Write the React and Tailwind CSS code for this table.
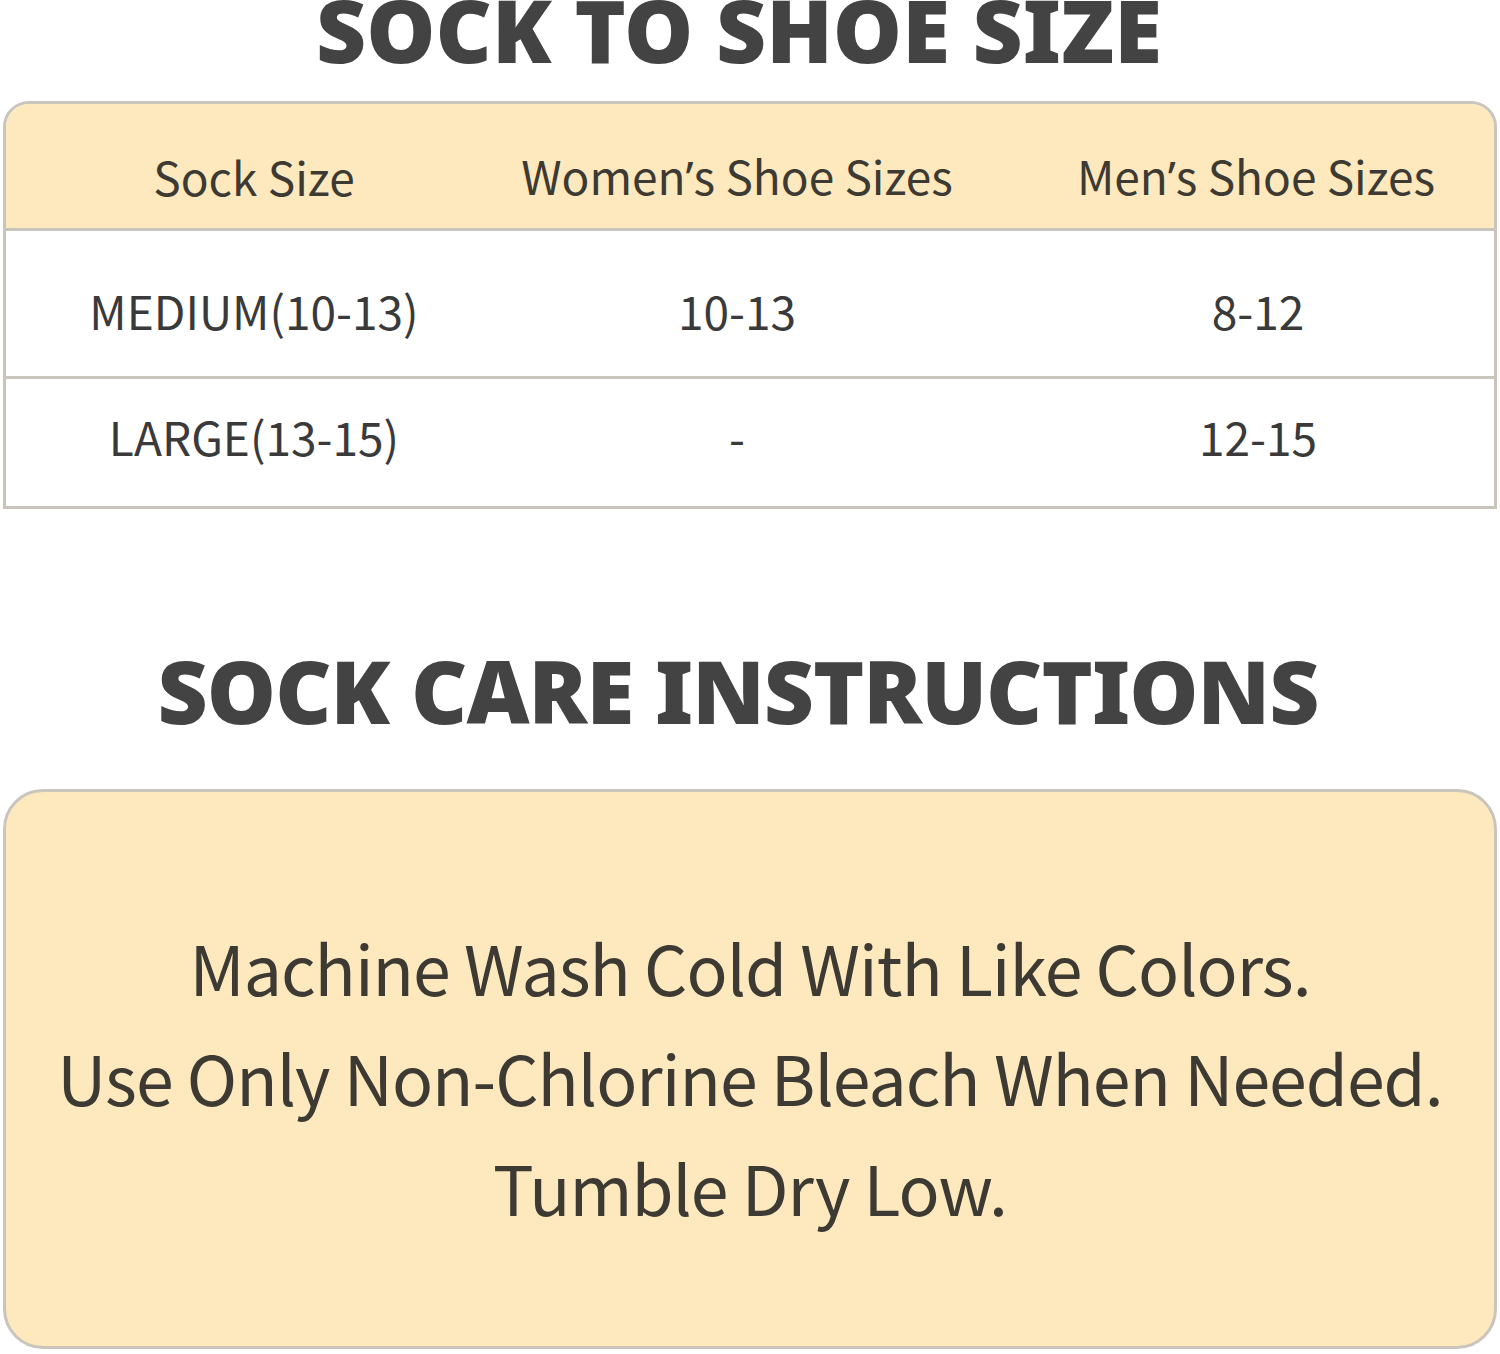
export default function App() {
  const rows = [
    { cells: ["MEDIUM(10-13)", "10-13", "8-12"], cls: "h-[148px] pt-[14px] border-b-[3px] border-[#c9c5bd]" },
    { cells: ["LARGE(13-15)", "-", "12-15"], cls: "h-[127px] pb-[12px]" },
  ];
  const apos = <span className="font-['Noto_Sans',sans-serif]">’</span>;

  return (
    <div className="w-[1500px] h-[1354px] bg-white overflow-hidden text-[#3d3a33]">
      <h1 className="h-[101px] -mt-[14px] pr-[22px] text-center font-['Noto_Sans','Open_Sans',sans-serif] font-black text-[87px] leading-[1] text-[#434343]">
        SOCK TO SHOE SIZE
      </h1>

      <div className="mx-[3px] mt-[14px] w-[1494px] border-[3px] border-[#c9c5bd] rounded-t-[26px] overflow-hidden font-['Noto_Sans_CJK_SC','Noto_Sans',sans-serif]">
        <div className="grid grid-cols-[496px_470px_1fr] h-[127px] pt-[20px] bg-[#fde9bd] border-b-[3px] border-[#c9c5bd] items-center text-[46px]">
          <div className="text-center">Sock Size</div>
          <div className="text-center">Women{apos}s Shoe Sizes</div>
          <div className="text-center pl-[46px]">Men{apos}s Shoe Sizes</div>
        </div>
        {rows.map((r, i) => (
          <div
            key={i}
            className={`grid grid-cols-[496px_470px_1fr] items-center text-[46px] text-[#3a3a3a] ${r.cls}`}
          >
            <div className="text-center">{r.cells[0]}</div>
            <div className="text-center">{r.cells[1]}</div>
            <div className="text-center pl-[50px]">{r.cells[2]}</div>
          </div>
        ))}
      </div>

      <h2 className="mt-[138px] pr-[24px] text-center font-['Noto_Sans','Open_Sans',sans-serif] font-black text-[87px] leading-[1] text-[#434343] tracking-[-1px]">
        SOCK CARE INSTRUCTIONS
      </h2>

      <div className="mx-[3px] mt-[55px] w-[1494px] h-[560px] pt-[16px] bg-[#fde9bd] border-[3px] border-[#c9c5bd] rounded-[40px] flex flex-col items-center justify-center font-['Noto_Sans_CJK_SC','Noto_Sans',sans-serif] text-[68px] leading-[110px] text-[#3d3a33] tracking-[-1px]">
        <div>Machine Wash Cold With Like Colors.</div>
        <div>Use Only Non-Chlorine Bleach When Needed.</div>
        <div>Tumble Dry Low.</div>
      </div>
    </div>
  );
}
